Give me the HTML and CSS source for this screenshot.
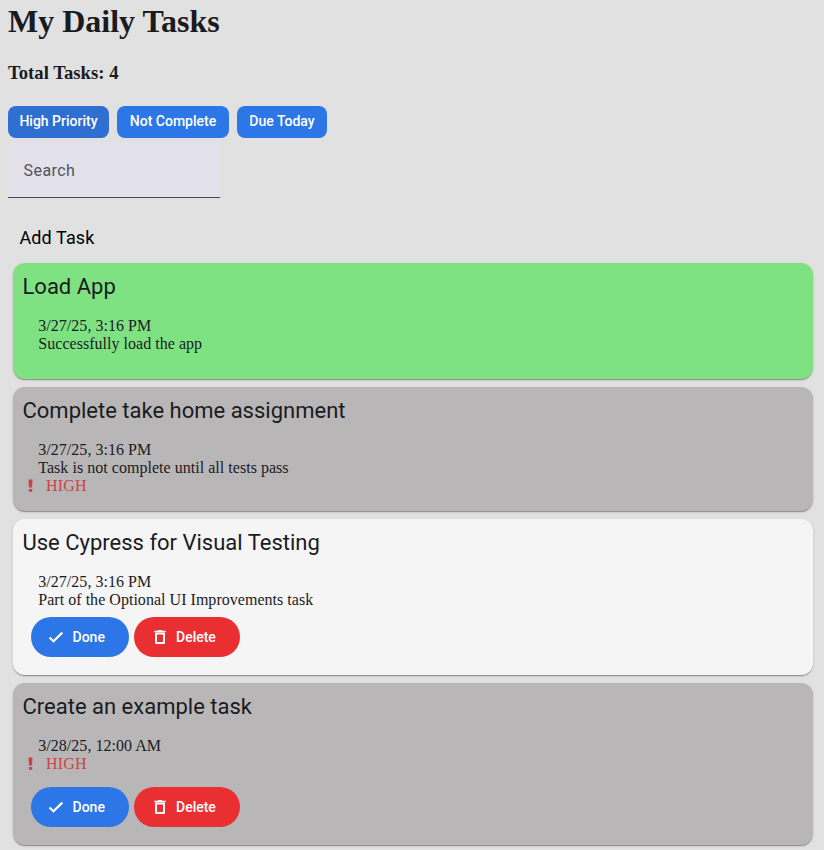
FILE: index.html
```html
<!DOCTYPE html>
<html lang="en">
<head>
<meta charset="utf-8">
<title>My Daily Tasks</title>
<link rel="stylesheet" href="styles.css">
</head>
<body>
<svg class="sprite" width="0" height="0" aria-hidden="true">
  <symbol id="check" viewBox="0 0 18 18"><path d="M2.500 9.500L6.500 13.300L15.300 4.600" fill="none" stroke="currentColor" stroke-width="2.200"/></symbol>
  <symbol id="trash" viewBox="0 0 18 18"><path d="M5 5.500h8v9.500H5z" fill="none" stroke="currentColor" stroke-width="2" stroke-linejoin="round"/><path d="M3.300 2.700h3.200l.8-.7h3.400l.8.7h3.200v1.600H3.300z"/></symbol>
  <symbol id="alert" viewBox="0 0 18 18"><path d="M6.500 2.500h4l-.5 8H7zM7 12h3.200v2.800H7z"/></symbol>
</svg>
<h1>My Daily Tasks</h1>
<h3>Total Tasks: 4</h3>
<div class="chips">
  <button class="chip chip-high">High Priority</button>
  <button class="chip chip-open">Not Complete</button>
  <button class="chip chip-today">Due Today</button>
</div>
<label class="search">Search</label>
<div class="add">Add Task</div>
<main class="list">
  <section class="card card-done">
    <h2>Load App</h2>
    <div class="line">3/27/25, 3:16 PM</div>
    <div class="line">Successfully load the app</div>
  </section>
  <section class="card card-high card-short">
    <h2>Complete take home assignment</h2>
    <div class="line">3/27/25, 3:16 PM</div>
    <div class="line">Task is not complete until all tests pass</div>
    <div class="priority"><svg><use href="#alert"/></svg><span>HIGH</span></div>
  </section>
  <section class="card card-plain">
    <h2>Use Cypress for Visual Testing</h2>
    <div class="line">3/27/25, 3:16 PM</div>
    <div class="line">Part of the Optional UI Improvements task</div>
    <div class="actions">
      <button class="btn done"><svg><use href="#check"/></svg>Done</button>
      <button class="btn delete"><svg><use href="#trash"/></svg>Delete</button>
    </div>
  </section>
  <section class="card card-high card-tall">
    <h2>Create an example task</h2>
    <div class="line">3/28/25, 12:00 AM</div>
    <div class="priority"><svg><use href="#alert"/></svg><span>HIGH</span></div>
    <div class="actions">
      <button class="btn done"><svg><use href="#check"/></svg>Done</button>
      <button class="btn delete"><svg><use href="#trash"/></svg>Delete</button>
    </div>
  </section>
</main>
</body>
</html>
```
FILE: styles.css
```css
* { box-sizing: border-box; }
body {
  margin: 0;
  padding: 3px 11px 0 8px;
  height: 850px;
  overflow: hidden;
  background: #e1e1e1;
  color: #1a1b1f;
  font: 16px/18px "Liberation Serif", serif;
}
.sprite { display: none; }
svg { fill: currentColor; flex: none; }
h1 { margin: 0; font-size: 32px; line-height: 37px; }
h3 { margin: 22px 0 0; font-size: 18.720px; line-height: 22px; }
button { border: 0; padding: 0; margin: 0; color: #fff; font: 500 14px/20px Roboto, sans-serif; white-space: nowrap; }
.chips { display: flex; gap: 8px; margin-top: 22px; }
.chip { height: 32px; padding-bottom: 2px; border-radius: 8px; background: #2d76e7; }
.chip-high { width: 101px; background: #2f6fd2; }
.chip-open { width: 112px; }
.chip-today { width: 90px; }
.search {
  display: block;
  width: 212px;
  height: 56px;
  margin-top: 4px;
  padding: 17px 15.500px 14px;
  border-bottom: 1px solid #44474e;
  border-radius: 4px 4px 0 0;
  background: #e3e1ec;
  color: #51525a;
  font: 16px/24px Roboto, sans-serif;
  letter-spacing: .45px;
}
.add { margin: 28px 0 0 11.500px; color: #000; font: 18px/24px Roboto, sans-serif; letter-spacing: .1px; }
.list { display: flex; flex-direction: column; gap: 8px; margin: 13px 0 0 5px; }
.card {
  height: 116px;
  padding: 10px 10px 0 9.500px;
  border-radius: 12px;
  box-shadow: 0 2px 1px -1px rgba(0,0,0,.2), 0 1px 1px rgba(0,0,0,.14), 0 1px 3px rgba(0,0,0,.12);
}
.card-done { background: #7fe282; }
.card-high { background: #b8b6b7; }
.card-short { height: 124px; }
.card-plain { height: 156px; background: #f5f5f5; }
.card-tall { height: 162px; }
h2 { margin: 0 0 16px; font: 22px/28px Roboto, sans-serif; }
.line { margin-left: 15.800px; letter-spacing: .03px; }
.priority { display: flex; align-items: center; height: 18px; margin-left: .5px; color: #ce4247; }
.priority svg { width: 18px; height: 18px; margin: 0 6px 0 -1px; }
.priority span { letter-spacing: .15px; }
.actions { display: flex; gap: 5px; margin: 8px 0 0 8.500px; }
.card-tall .actions { margin-top: 14px; }
.btn { display: flex; align-items: center; height: 40px; padding-left: 16px; border-radius: 20px; }
.btn svg { width: 18px; height: 18px; margin-right: 7.500px; }
.done { width: 98px; background: #2d76e7; }
.delete { width: 106px; padding-left: 16.500px; background: #ea2f33; }
```
